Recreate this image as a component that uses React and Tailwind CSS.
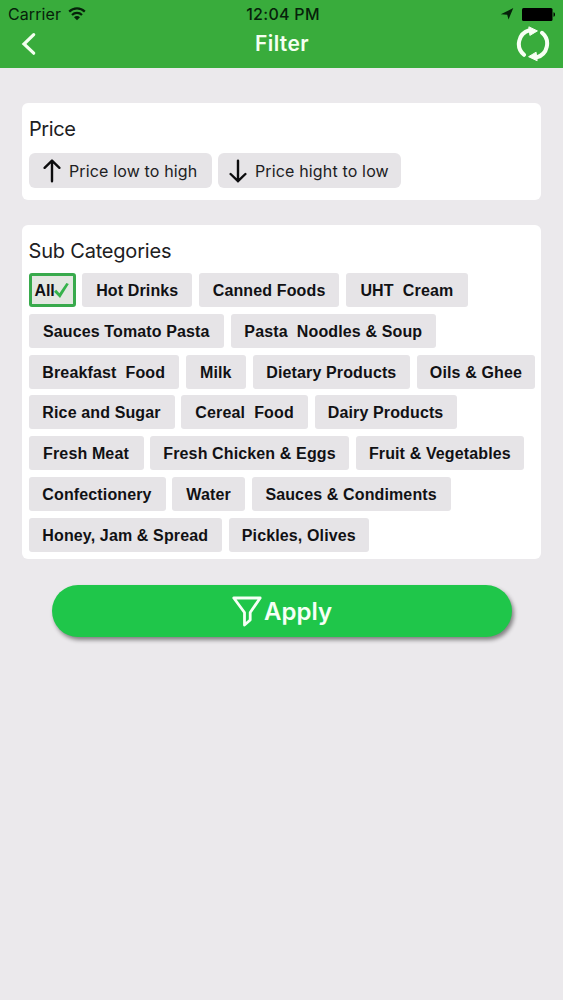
import { useState } from "react";
import clsx from "clsx";

const subCategories = [
  { name: "All", width: "w-[47px]" },
  { name: "Hot Drinks", width: "w-[110px]" },
  { name: "Canned Foods", width: "w-[140px]" },
  { name: "UHT  Cream", width: "w-[122px]" },
  { name: "Sauces Tomato Pasta", width: "w-[195.5px]" },
  { name: "Pasta  Noodles & Soup", width: "w-[205px]" },
  { name: "Breakfast  Food", width: "w-[150.5px]" },
  { name: "Milk", width: "w-[60px]" },
  { name: "Dietary Products", width: "w-[157.5px]" },
  { name: "Oils & Ghee", width: "w-[118px]" },
  { name: "Rice and Sugar", width: "w-[146px]" },
  { name: "Cereal  Food", width: "w-[126.5px]" },
  { name: "Dairy Products", width: "w-[142px]" },
  { name: "Fresh Meat", width: "w-[115px]" },
  { name: "Fresh Chicken & Eggs", width: "w-[198.5px]" },
  { name: "Fruit & Vegetables", width: "w-[168.5px]" },
  { name: "Confectionery", width: "w-[137px]" },
  { name: "Water", width: "w-[72.5px]" },
  { name: "Sauces & Condiments", width: "w-[199px]" },
  { name: "Honey, Jam & Spread", width: "w-[193.5px]" },
  { name: "Pickles, Olives", width: "w-[140px]" },
];

const WifiIcon = () => (
  <svg width="18" height="14" viewBox="0 0 18 14" fill="none" stroke="#06210a" strokeWidth="2.2">
    <path d="M1.2 4.6a11 11 0 0 1 15.6 0" />
    <path d="M4 7.9a7 7 0 0 1 10 0" />
    <path d="M9 13.2 6 10.2a4.2 4.2 0 0 1 6 0Z" fill="#06210a" stroke="none" />
  </svg>
);

const RefreshIcon = () => (
  <svg className="shrink-0" width="34" height="36" viewBox="0 0 34 36" fill="none" stroke="#f8fff4" strokeWidth="4" strokeLinecap="round">
    <path d="M8 28.8A14.2 14.2 0 0 1 13.4 4.2" />
    <path d="M26 6.8A14.2 14.2 0 0 1 20.6 31.4" />
    <path d="M13.2 1 21.4 4.9 14.2 9.2Z" fill="#f8fff4" strokeWidth="1" strokeLinejoin="round" />
    <path d="M20.8 34.6 12.6 30.7 19.8 26.4Z" fill="#f8fff4" strokeWidth="1" strokeLinejoin="round" />
  </svg>
);

const Header = () => (
  <header className="h-[68px] bg-[#39ac3c]">
    <div className="grid h-7 grid-cols-3 items-center pl-2 pr-[7px] text-[16px] leading-7 text-[#06210a]">
      <div className="flex items-center gap-[7px]">
        <span className="tracking-[0.1px]">Carrier</span>
        <WifiIcon />
      </div>
      <span className="pl-0.5 text-center font-medium tracking-[0.3px]">12:04 PM</span>
      <div className="flex items-center justify-end gap-2">
        <svg width="14" height="12" viewBox="0 0 14 12" fill="#06210a">
          <path d="M13.3 0 8.5 11.5 7.2 6.8 0.8 6.2Z" />
        </svg>
        <svg width="34" height="13" viewBox="0 0 34 13" fill="#000">
          <rect width="30.5" height="13" rx="1.5" />
          <path d="M31.5 4.2c2 .4 2 4.2 0 4.6Z" />
        </svg>
      </div>
    </div>
    <div className="grid h-[31px] grid-cols-3 items-center pl-[21px] pr-[13px] text-[#f4fff0]">
      <button aria-label="Back" className="w-4">
        <svg width="16" height="24" viewBox="0 0 16 24" fill="none" stroke="currentColor" strokeWidth="3.2" strokeLinecap="round">
          <path d="M12.7 2.7 3 12l9.7 9.2" />
        </svg>
      </button>
      <h1 className="pr-[7px] text-center text-[21px] font-semibold leading-7 tracking-[0.4px]">Filter</h1>
      <button aria-label="Reset" className="flex h-[31px] items-center justify-end">
        <RefreshIcon />
      </button>
    </div>
  </header>
);

const SortButton = ({ direction, label, className }) => (
  <button className={clsx("flex h-[35px] items-center rounded-md bg-[#e6e4e7] text-[16px] text-[#202022]", className)}>
    <svg width="18" height="24" viewBox="0 0 18 24" fill="none" stroke="#0c0c0e" strokeWidth="2.4" strokeLinecap="round" strokeLinejoin="round">
      {direction === "up" ? <path d="M9 22.2V1.6M1.6 8.8 9 1.6l7.4 7.2" /> : <path d="M9 1.6v20.6M1.6 15 9 22.2l7.4-7.2" />}
    </svg>
    <span className="whitespace-nowrap">{label}</span>
  </button>
);

const CategoryChip = ({ category, selected, onSelect }) => (
  <button
    onClick={onSelect}
    className={clsx(
      "flex h-[34px] shrink-0 items-center justify-center whitespace-pre rounded-[3px] pt-0.5 font-['Liberation_Sans',sans-serif] text-[16px] font-bold text-[#111114]",
      category.width,
      selected ? "border-3 border-[#38aa4c] bg-[#e3e7e1] tracking-[-0.2px]" : "bg-[#e6e4e7] tracking-[0.13px]"
    )}
  >
    {category.name}
    {selected && (
      <svg className="mb-0.5 shrink-0" width="15" height="17" viewBox="0 0 15 17" fill="#36b34b">
        <path d="M0 9.8 2.2 7.8 5.4 11.2 12.4 1 14.8 2 6 16Z" />
      </svg>
    )}
  </button>
);

const App = () => {
  const [selected, setSelected] = useState("All");

  return (
    <div className="h-[1000px] w-[563px] overflow-hidden bg-[#ebe9ec] font-['Inter',sans-serif]">
      <Header />

      <main className="px-[22px] pt-[35px]">
        <section className="h-[97px] rounded-md bg-white pl-[7px] pt-3">
          <h2 className="text-[20px] leading-7 tracking-[-0.4px] text-[#202022]">Price</h2>
          <div className="mt-2.5 flex gap-1.5">
            <SortButton direction="up" label="Price low to high" className="w-[183px] gap-2 pl-3.5 tracking-[0.15px]" />
            <SortButton direction="down" label="Price hight to low" className="w-[183px] gap-2 pl-[11px] tracking-[0.15px]" />
          </div>
        </section>

        <section className="mt-[25px] h-[334px] rounded-md bg-white pl-[6.5px] pt-3">
          <h2 className="text-[20px] leading-7 tracking-[-0.2px] text-[#202022]">Sub Categories</h2>
          <div className="mt-2 flex flex-wrap gap-x-[6.8px] gap-y-[6.8px]">
            {subCategories.map((category) => (
              <CategoryChip
                key={category.name}
                category={category}
                selected={selected === category.name}
                onSelect={() => setSelected(category.name)}
              />
            ))}
          </div>
        </section>

        <button className="ml-[30px] mt-[26px] flex h-[52px] w-[460px] items-center justify-center rounded-[26px] bg-[#1fc64a] text-[24px] font-semibold text-[#f6fff6] shadow-[2px_3px_4px_rgba(0,0,0,0.45)]">
          <svg width="30" height="31" viewBox="0 0 30 31" fill="none" stroke="currentColor" strokeWidth="2.8" strokeLinejoin="round">
            <path d="M1.8 2H28.2L18.2 16.5V24L12.5 29V16.5Z" />
          </svg>
          <span className="ml-0.5 pt-0.5">Apply</span>
        </button>
      </main>
    </div>
  );
};

export default App;
